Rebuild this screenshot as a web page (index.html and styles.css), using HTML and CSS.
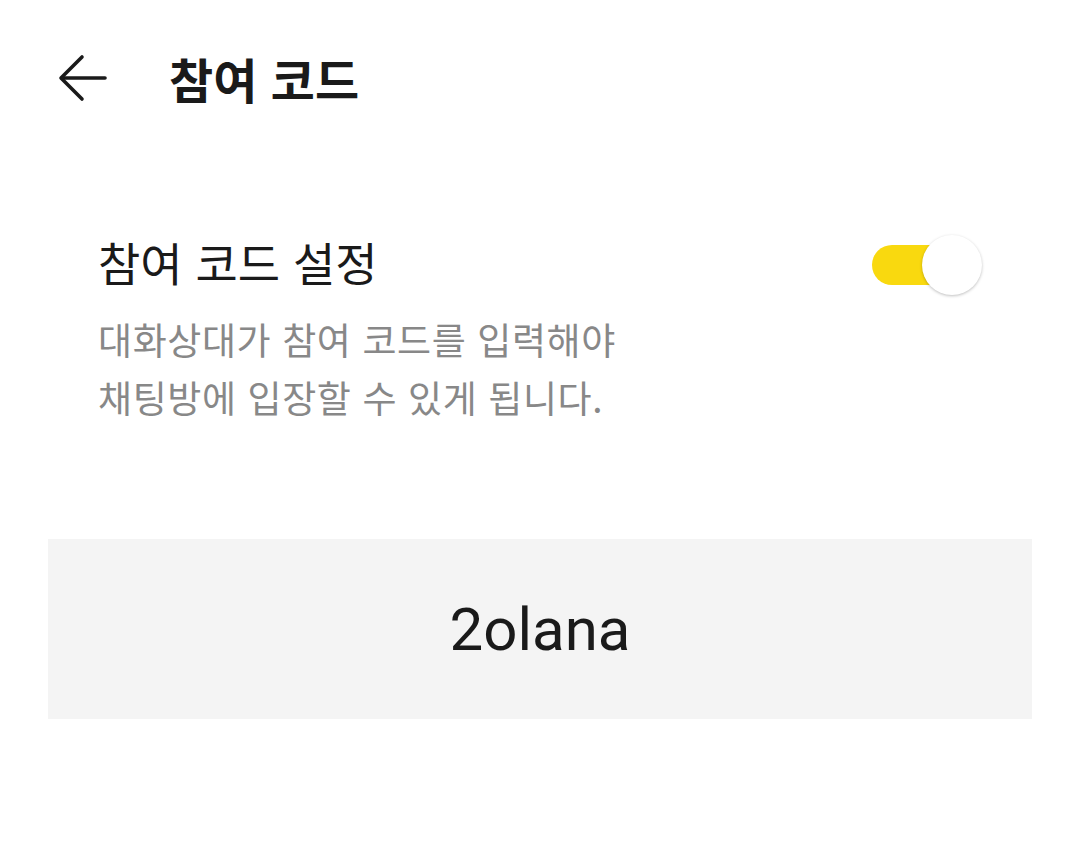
FILE: index.html
```html
<!DOCTYPE html>
<html lang="ko">
<head>
    <meta charset="UTF-8">
    <meta name="viewport" content="width=device-width, initial-scale=1.0">
    <title>참여 코드</title>
    <link rel="stylesheet" href="styles.css">
</head>
<body>
    <div class="header">
        <button class="back-button" aria-label="뒤로">
            <svg width="52" height="52" viewBox="0 0 52 52" fill="none" stroke="#1a1a1a" stroke-width="3.6" stroke-linecap="round" stroke-linejoin="round">
                <path d="M49 26H6"/>
                <path d="M26 5L5 26L26 47"/>
            </svg>
        </button>
        <h1>참여 코드</h1>
    </div>

    <div class="setting">
        <div class="setting-row">
            <div class="setting-label">참여 코드 설정</div>
            <div class="toggle on">
                <div class="toggle-track"></div>
                <div class="toggle-knob"></div>
            </div>
        </div>
        <p class="setting-desc">대화상대가 참여 코드를 입력해야<br>채팅방에 입장할 수 있게 됩니다.</p>
    </div>

    <div class="code-box">2olana</div>
</body>
</html>
```

FILE: styles.css
```css
/* Mise en page générale */
body {
    font-family: 'Noto Sans CJK KR', 'Noto Sans', sans-serif;
    margin: 0;
    padding: 0;
    background: #fff;
    color: #1a1a1a;
}

.header {
    display: flex;
    align-items: center;
    height: 156px;
    padding: 0 0 0 56px;
}

.back-button {
    background: none;
    border: none;
    padding: 0;
    margin: 0;
    width: 56px;
    height: 52px;
    display: flex;
    align-items: center;
}

.header h1 {
    font-size: 48px;
    font-weight: 700;
    margin: 0 0 0 57px;
    line-height: 1;
}

.setting {
    padding: 75px 98px 0 98px;
}

.setting-row {
    display: flex;
    justify-content: space-between;
    align-items: center;
    height: 60px;
}

.setting-label {
    font-size: 46px;
    line-height: 60px;
}

.toggle {
    position: relative;
    width: 112px;
    height: 62px;
    margin-right: -2px;
    margin-top: 8px;
}

.toggle-track {
    position: absolute;
    left: 0;
    top: 11px;
    width: 80px;
    height: 40px;
    border-radius: 20px;
    background: #f9d90f;
}

.toggle-knob {
    position: absolute;
    left: 50px;
    top: 1px;
    width: 60px;
    height: 60px;
    border-radius: 50%;
    background: #fff;
    box-shadow: 0 1px 3px rgba(0, 0, 0, 0.25);
}

.setting-desc {
    color: #888;
    font-size: 37px;
    letter-spacing: 0.6px;
    line-height: 58px;
    margin: 19px 0 0 0;
}

.code-box {
    margin: 113px 48px 0 48px;
    height: 180px;
    background: #f4f4f4;
    display: flex;
    align-items: center;
    justify-content: center;
    font-family: Roboto, 'Noto Sans', sans-serif;
    font-size: 60px;
    color: #1a1a1a;
}
```
